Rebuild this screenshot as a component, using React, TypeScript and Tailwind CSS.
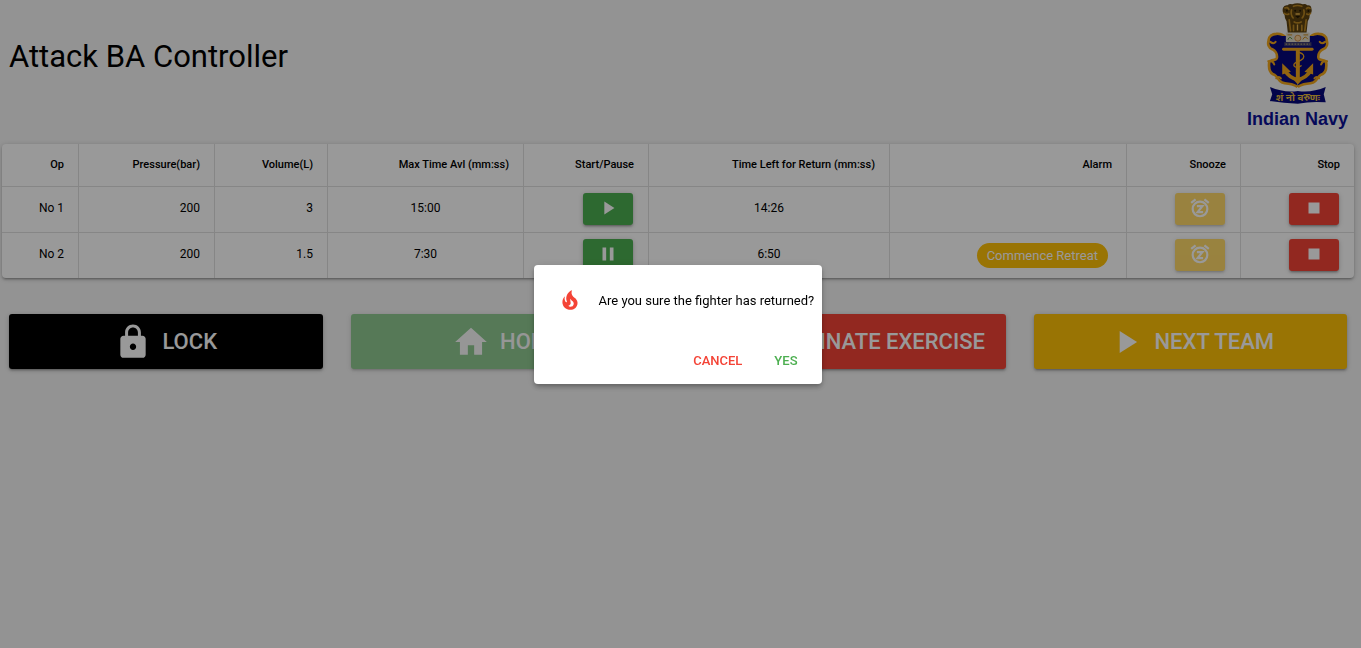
import type { ReactNode } from 'react'
import { MdHome, MdLock, MdPause, MdPlayArrow, MdStop, MdWarning } from 'react-icons/md'

const columns = [
  { label: 'Op', width: 'w-[77px]' },
  { label: 'Pressure(bar)', width: 'w-[136px]' },
  { label: 'Volume(L)', width: 'w-[113px]' },
  { label: 'Max Time Avl (mm:ss)', width: 'w-[196px]' },
  { label: 'Start/Pause', width: 'w-[125px]' },
  { label: 'Time Left for Return (mm:ss)', width: 'w-[241px]' },
  { label: 'Alarm', width: 'w-[237px]' },
  { label: 'Snooze', width: 'w-[114px]' },
  { label: 'Stop', width: 'w-[113px]' },
]

const operators = [
  { op: 'No 1', pressure: 200, volume: 3, max: '15:00', left: '14:26', running: false, alarm: '' },
  { op: 'No 2', pressure: 200, volume: 1.5, max: '7:30', left: '6:50', running: true, alarm: 'Commence Retreat' },
]

const raised = 'shadow-[0_1px_5px_rgba(0,0,0,0.2),0_2px_2px_rgba(0,0,0,0.14),0_3px_1px_-2px_rgba(0,0,0,0.12)]'
const cell = 'border-r border-black/12 last:border-r-0'
const textCell = `${cell} pr-3.5 pb-1`
const buttonCell = `${cell} pr-[15px] pb-0.5`

function NavyCrest() {
  const half =
    'M172 262 C160 250 142 254 126 248 C112 242 112 230 104 226 C90 222 84 208 87 186 C94 178 108 184 110 174 C112 162 104 152 96 148 C84 144 82 132 85 122 C84 110 96 102 108 102 C122 100 130 106 136 112 L172 118'
  return (
    <svg viewBox="78 6 188 310" className="h-[103px] w-[63px]" aria-hidden="true">
      {/* lion capital */}
      <path
        fill="#5c4210"
        d="M128 24 q4 -10 14 -8 q6 -6 14 -3 q16 -7 32 0 q8 -3 13 3 q12 -2 13 10 q3 10 -5 18 q0 12 -6 20 l-4 36 h-56 l-4 -36 q-6 -8 -6 -20 q-8 -8 -5 -20z"
      />
      <g fill="none" stroke="#b98622" strokeWidth="5" strokeLinecap="round">
        <path d="M134 24 q8 -4 12 4 M199 26 q5 -6 11 -1 M132 40 q8 6 14 2 M200 42 q6 4 11 -2" />
        <path d="M160 19 q12 -5 25 0 M154 30 q-4 14 5 24 M191 30 q4 14 -5 24 M162 66 q10 6 21 0" />
        <path d="M147 60 l4 32 M160 76 v16 M185 76 v16 M198 60 l-4 32" />
      </g>
      <path fill="none" stroke="#e5b04a" strokeWidth="4" d="M172 74 v18 M166 42 h13" />
      <g fill="#241703">
        <circle cx="165" cy="32" r="3" />
        <circle cx="180" cy="32" r="3" />
        <path d="M165 48 h15 l-7 7z" />
        <circle cx="140" cy="32" r="3" />
        <circle cx="205" cy="33" r="3" />
      </g>

      {/* shield */}
      <g fill="#06087c" stroke="#f2a71b" strokeWidth="8" strokeLinejoin="round">
        <path d={half} />
        <path d={half} transform="translate(345 0) scale(-1 1)" />
      </g>
      <path fill="#06087c" d="M118 108 h109 l-2 66 l6 46 l-18 22 h-81 l-18 -22 l6 -46z" />
      <g fill="none" stroke="#f2a71b" strokeWidth="6" strokeLinecap="round">
        <path d="M90 126 q10 8 16 0 M255 126 q-10 8 -16 0" />
        <path d="M84 184 q14 -2 18 10 M261 184 q-14 -2 -18 10" />
        <path d="M108 236 q8 -8 14 0 M237 236 q-8 -8 -14 0" />
      </g>

      {/* abacus */}
      <rect x="137" y="98" width="72" height="29" rx="3" fill="#ded9c8" />
      <circle cx="173" cy="115" r="9" fill="#f6cf9a" stroke="#cf8f45" strokeWidth="3" />
      <path fill="none" stroke="#55923c" strokeWidth="3" d="M143 120 q5 -14 13 -2" />
      <path fill="none" stroke="#c98a1e" strokeWidth="3" d="M188 119 q7 -14 15 -1 M142 105 h14 M190 105 h14" />
      <rect x="132" y="127" width="82" height="12" fill="#3f3e70" />
      <path stroke="#a99c7c" strokeWidth="4" strokeDasharray="5 4" d="M136 133 h74" />

      {/* anchor */}
      <g fill="none" stroke="#f2a71b">
        <path strokeWidth="9" strokeLinecap="round" d="M130 148 h86" />
        <path strokeWidth="12" d="M173 148 v90" />
        <path strokeWidth="11" d="M134 212 q12 22 39 28 q27 -6 39 -28" />
      </g>
      <path
        fill="none"
        stroke="#f2a71b"
        strokeWidth="4"
        strokeLinecap="round"
        d="M178 158 q18 6 11 18 q-8 8 -20 11 q-12 6 -6 13 q10 6 20 -2"
      />
      <path fill="#f2a71b" d="M126 190 l26 26 l-26 8z M219 190 l-26 26 l26 8z M158 238 h30 l-15 16z" />

      {/* motto ribbon */}
      <path fill="#06087c" d="M89 262 q42 18 84 12 q42 6 84 -12 l-6 22 l6 24 q-42 -4 -84 4 q-42 -2 -84 -8 l7 -20z" />
      <text x="173" y="304" textAnchor="middle" fill="#e5b93f" className="font-['Noto_Sans',sans-serif] text-[30px] font-bold">
        शं नो वरुणः
      </text>
    </svg>
  )
}

function FlameIcon() {
  return (
    <svg viewBox="0 0 24 24" className="size-[26px]" fill="currentColor" aria-hidden="true">
      <path d="M17.66 11.2C17.43 10.9 17.15 10.64 16.89 10.38C16.22 9.78 15.46 9.35 14.82 8.72C13.33 7.26 13 4.85 13.95 3C13 3.23 12.17 3.75 11.46 4.32C8.87 6.4 7.85 10.07 9.07 13.22C9.11 13.32 9.15 13.42 9.15 13.55C9.15 13.77 9 13.97 8.8 14.05C8.57 14.15 8.33 14.09 8.14 13.93C8.08 13.88 8.04 13.83 8 13.76C6.87 12.33 6.69 10.28 7.45 8.64C5.78 10 4.87 12.3 5 14.47C5.06 14.97 5.12 15.47 5.29 15.97C5.43 16.57 5.7 17.17 6 17.7C7.08 19.43 8.95 20.67 10.96 20.92C13.1 21.19 15.39 20.8 17.03 19.32C18.86 17.66 19.5 15 18.56 12.72L18.43 12.46C18.22 12 17.66 11.2 17.66 11.2M14.5 17.5C14.22 17.74 13.76 18 13.4 18.1C12.28 18.5 11.16 17.94 10.5 17.28C11.69 17 12.4 16.12 12.61 15.23C12.78 14.43 12.46 13.77 12.33 13C12.21 12.26 12.23 11.63 12.5 10.94C12.69 11.32 12.89 11.7 13.13 12C13.9 13 15.11 13.44 15.37 14.8C15.41 14.94 15.43 15.08 15.43 15.23C15.46 16.05 15.1 16.95 14.5 17.5H14.5Z" />
    </svg>
  )
}

function SnoozeIcon() {
  return (
    <svg viewBox="0 0 24 24" className="size-[22px]" fill="none" stroke="currentColor" strokeWidth="2.4" aria-hidden="true">
      <circle cx="12" cy="13" r="8" />
      <path d="M2.4 6.5 7.2 2.5M21.6 6.5 16.8 2.5M8.6 10h6l-5.2 6.4h6" />
    </svg>
  )
}

function IconButton({ label, color, disabled, children }: { label: string; color: string; disabled?: boolean; children: ReactNode }) {
  return (
    <button
      type="button"
      aria-label={label}
      disabled={disabled}
      className={`inline-flex h-8 w-[50px] items-center justify-center rounded-[3px] pb-0.5 align-middle text-[22px] text-white disabled:opacity-60 ${raised} ${color}`}
    >
      {children}
    </button>
  )
}

function ActionButton({ label, color, icon, disabled }: { label: string; color: string; icon: ReactNode; disabled?: boolean }) {
  return (
    <button
      type="button"
      disabled={disabled}
      className={`flex h-[55px] items-center justify-center gap-2.5 rounded-[3px] text-[22px] font-medium whitespace-nowrap text-white uppercase disabled:opacity-60 ${raised} ${color}`}
    >
      <span className="text-[38px]">{icon}</span>
      {label}
    </button>
  )
}

function OperatorTable() {
  return (
    <div className={`mr-[7px] ml-0.5 overflow-hidden rounded bg-white ${raised}`}>
      <table className="w-full table-fixed border-separate border-spacing-0 text-right text-[12px]">
        <thead>
          <tr className="h-[43px] text-[11px]">
            {columns.map((c) => (
              <th key={c.label} scope="col" className={`${c.width} ${cell} border-b pr-3.5 font-medium whitespace-nowrap`}>
                {c.label}
              </th>
            ))}
          </tr>
        </thead>
        <tbody className="[&>tr:first-child>td]:border-b">
          {operators.map((o) => (
            <tr key={o.op} className="h-[46px] last:h-[45px]">
              <td className={textCell}>{o.op}</td>
              <td className={textCell}>{o.pressure}</td>
              <td className={textCell}>{o.volume}</td>
              <td className={`${cell} pb-1 text-center`}>{o.max}</td>
              <td className={buttonCell}>
                <IconButton label={o.running ? 'Pause' : 'Start'} color="bg-[#4caf50]">
                  {o.running ? <MdPause /> : <MdPlayArrow />}
                </IconButton>
              </td>
              <td className={`${cell} pb-1 text-center`}>{o.left}</td>
              <td className={`${cell} pr-[18px]`}>
                {o.alarm && (
                  <span className="inline-block rounded-full bg-[#ffc107] px-2.5 align-middle text-[13px] leading-[25px] text-white">
                    {o.alarm}
                  </span>
                )}
              </td>
              <td className={buttonCell}>
                <IconButton label="Snooze" color="bg-[#ffc107]" disabled>
                  <SnoozeIcon />
                </IconButton>
              </td>
              <td className={buttonCell}>
                <IconButton label="Stop" color="bg-[#f44336]">
                  <MdStop />
                </IconButton>
              </td>
            </tr>
          ))}
        </tbody>
      </table>
    </div>
  )
}

function ReturnDialog() {
  return (
    <div className="fixed inset-0 flex items-center justify-center bg-black/40 pr-1.5">
      <div
        role="dialog"
        aria-modal="true"
        aria-labelledby="return-message"
        className="w-72 rounded bg-white shadow-[0_2px_4px_-1px_rgba(0,0,0,0.2),0_4px_5px_rgba(0,0,0,0.14),0_1px_10px_rgba(0,0,0,0.12)]"
      >
        <div className="flex items-center py-3.5 pl-[15px]">
          <div className="flex size-[42px] shrink-0 items-center justify-center text-[#f44336]">
            <FlameIcon />
          </div>
          <p id="return-message" className="ml-2 pt-0.5 text-[13px] whitespace-nowrap">
            Are you sure the fighter has returned?
          </p>
        </div>
        <div className="flex justify-end p-2 text-[13px] font-medium">
          <button type="button" className="h-[33px] px-4 pt-1 text-[#f44336] uppercase">
            Cancel
          </button>
          <button type="button" className="h-[33px] px-4 pt-1 text-[#4caf50] uppercase">
            Yes
          </button>
        </div>
      </div>
    </div>
  )
}

export default function App() {
  return (
    <div className="min-h-screen bg-[#f5f5f5] font-[Roboto,sans-serif] text-black">
      <header className="flex h-36 justify-between pr-[13px] pl-[9px]">
        <h1 className="pt-[33px] text-[31px] leading-12 font-normal">Attack BA Controller</h1>
        <div className="flex flex-col items-center pt-0.5">
          <NavyCrest />
          <span className="pt-0.5 font-['Liberation_Sans',Arial,sans-serif] text-[18px] leading-6 font-bold text-[#0a0f96]">Indian Navy</span>
        </div>
      </header>

      <OperatorTable />

      <div className="mt-9 mr-3.5 ml-[9px] grid grid-cols-4 gap-7">
        <ActionButton label="Lock" color="bg-black" icon={<MdLock />} />
        <ActionButton label="Home" color="bg-[#4caf50]" icon={<MdHome />} disabled />
        <ActionButton label="Terminate Exercise" color="bg-[#f44336]" icon={<MdWarning />} />
        <ActionButton label="Next Team" color="bg-[#ffc107]" icon={<MdPlayArrow />} />
      </div>

      <ReturnDialog />
    </div>
  )
}
